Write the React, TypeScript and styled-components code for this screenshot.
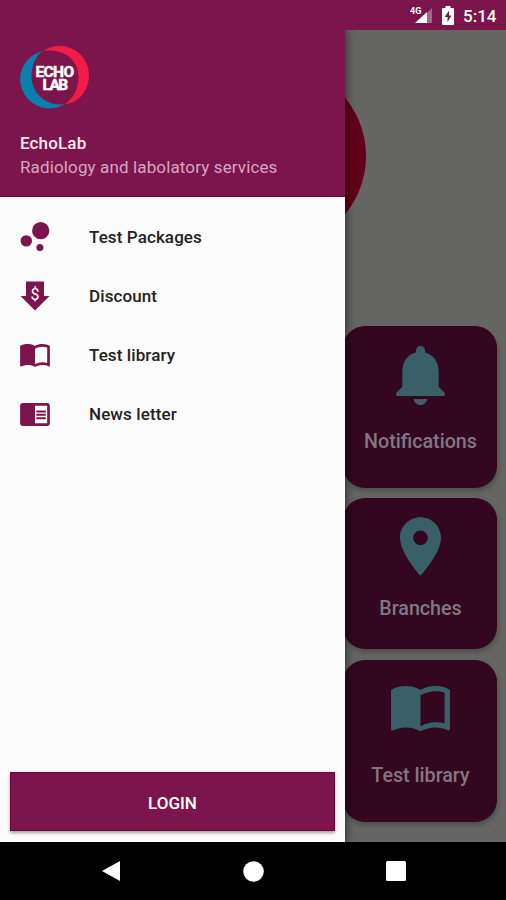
import React from 'react';
import styled, { createGlobalStyle } from 'styled-components';

const GlobalStyle = createGlobalStyle`
  *, *::before, *::after { box-sizing: border-box; }
  body { margin: 0; background: #000; font-family: Roboto, sans-serif; }
  svg { display: block; flex: none; }
`;

const plum = '#7c154b';

const Screen = styled.div`
  width: 506px;
  height: 900px;
  display: flex;
  flex-direction: column;
  overflow: hidden;
`;

const StatusBar = styled.header`
  flex: 0 0 30px;
  display: flex;
  align-items: center;
  justify-content: flex-end;
  padding-right: 9px;
  background: ${plum};
  color: #fff;
`;

const Clock = styled.span`
  margin-left: 9px;
  width: 34px;
  font-size: 17px;
  font-weight: 500;
  line-height: 26px;
  padding-top: 2px;
  white-space: nowrap;
`;

const BatteryIcon = styled.svg`
  margin-left: 9px;
`;

const Body = styled.main`
  position: relative;
  flex: 0 0 812px;
  overflow: hidden;
  background: #656564;
`;

const Home = styled.div`
  height: 100%;
  display: flex;
  flex-direction: column;
`;

const Hero = styled.div`
  flex: 0 0 296px;
  padding: 34px 0 0 182px;
`;

const HeroDisc = styled.div`
  width: 184px;
  height: 184px;
  border-radius: 50%;
  background: #600019;
`;

const Tiles = styled.div`
  display: flex;
  flex-direction: column;
  align-items: flex-end;
  gap: 10.5px;
  padding-right: 9.5px;
`;

const Tile = styled.div<{ $height: number; $top: number }>`
  width: 154px;
  height: ${({ $height }) => $height}px;
  padding-top: ${({ $top }) => $top}px;
  padding-left: 2px;
  display: flex;
  flex-direction: column;
  align-items: center;
  border-radius: 22px;
  background: #33071f;
  color: #3a6067;
  box-shadow: 1px 3px 5px rgba(0, 0, 0, 0.25);
`;

const TileLabel = styled.span<{ $gap: number }>`
  margin-top: ${({ $gap }) => $gap}px;
  color: #827780;
  font-size: 19.7px;
  font-weight: 500;
  line-height: 24px;
  white-space: nowrap;
`;

const Drawer = styled.aside`
  position: absolute;
  inset: 0 auto 0 0;
  width: 345px;
  display: flex;
  flex-direction: column;
  background: #fbfbfb;
  box-shadow: 0 0 9px 1px rgba(0, 0, 0, 0.55);
`;

const DrawerHeader = styled.div`
  flex: 0 0 167px;
  padding: 16px 20px 0;
  background: ${plum};
  border-bottom: 1px solid #6d0432;
`;

const BrandName = styled.div`
  margin-top: 22px;
  color: #fbeaf2;
  font-size: 17px;
  font-weight: 500;
  line-height: 23px;
  letter-spacing: 0.15px;
`;

const Tagline = styled.div`
  color: #d8a5c1;
  font-size: 17px;
  line-height: 24px;
  letter-spacing: 0.13px;
  white-space: nowrap;
`;

const Menu = styled.nav`
  flex: 1;
  padding-top: 10.5px;
`;

const MenuItem = styled.div`
  height: 59px;
  display: flex;
  align-items: center;
  padding-left: 20px;
  color: ${plum};
`;

const MenuIcon = styled.span`
  width: 69px;
`;

const MenuLabel = styled.span`
  margin-top: -1px;
  color: #222;
  font-size: 17px;
  font-weight: 500;
  line-height: 24px;
  letter-spacing: 0.1px;
`;

const LoginButton = styled.button`
  flex: 0 0 59px;
  margin: 0 10px 11px;
  border: 1px solid #6c0539;
  padding: 2px 0 0;
  background: ${plum};
  color: #fff;
  font: 500 17px Roboto, sans-serif;
  box-shadow: 0 2px 3px rgba(0, 0, 0, 0.35);
`;

const NavBar = styled.footer`
  flex: 0 0 58px;
  display: flex;
  align-items: center;
  justify-content: space-between;
  padding: 0 100px 0 101px;
  background: #000;
`;

const BOOK =
  'M21 5c-1.11-.35-2.33-.5-3.5-.5-1.95 0-4.05.4-5.5 1.5-1.45-1.1-3.55-1.5-5.5-1.5S2.45 4.9 1 6v14.65c0 .25.25.5.5.5.1 0 .15-.05.25-.05C3.1 20.45 5.05 20 6.5 20c1.95 0 4.05.4 5.5 1.5 1.35-.85 3.8-1.5 5.5-1.5 1.65 0 3.35.3 4.75 1.05.1.05.15.05.25.05.25 0 .5-.25.5-.5V6c-.6-.45-1.25-.75-2-1zm0 13.5c-1.1-.35-2.3-.5-3.5-.5-1.7 0-4.15.65-5.5 1.5V8c1.35-.85 3.8-1.5 5.5-1.5 1.2 0 2.4.15 3.5.5v11.5z';

const Book = ({ width, height }: { width: number; height: number }) => (
  <svg width={width} height={height} viewBox="1 4.5 22 17" fill="currentColor">
    <path d={BOOK} />
  </svg>
);

const Bell = () => (
  <svg width="49" height="59" viewBox="4 2.5 16 19.5" fill="currentColor">
    <path d="M12 22c1.1 0 2.2-.9 2.2-2H9.8c0 1.1 1.1 2 2.2 2zm6-6v-5c0-3.07-1.64-5.64-4.5-6.32V4c0-.83-.67-1.5-1.5-1.5s-1.5.67-1.5 1.5v.68C7.63 5.36 6 7.92 6 11v5l-2 2v1h16v-1l-2-2z" />
  </svg>
);

const Pin = () => (
  <svg width="41" height="59" viewBox="5 2 14 20" fill="currentColor">
    <path d="M12 2C8.13 2 5 5.13 5 9c0 5.25 7 13 7 13s7-7.75 7-13c0-3.87-3.13-7-7-7zm0 9.500c-1.380 0-2.500-1.120-2.500-2.500s1.120-2.500 2.500-2.500 2.500 1.120 2.500 2.500-1.120 2.500-2.500 2.500z" />
  </svg>
);

const Bubbles = () => (
  <svg width="30" height="30" viewBox="0 0 30 30" fill="currentColor">
    <circle cx="20.7" cy="8.700" r="8.600" />
    <circle cx="6.3" cy="18.900" r="5.700" />
    <circle cx="19.9" cy="25.400" r="3.500" />
  </svg>
);

const DiscountArrow = () => (
  <svg width="30" height="30" viewBox="0 0 30 30">
    <path d="M6 .5h18V15h5.500L15 29.500.5 15H6z" fill="currentColor" />
    <text x="15" y="18.500" textAnchor="middle" fontFamily="Roboto, sans-serif" fontSize="16" fill="#fff">
      $
    </text>
  </svg>
);

const Reader = () => (
  <svg width="30" height="23" viewBox="1 4 22 17" fill="currentColor">
    <path d="M13 12h7v1.500h-7zm0-2.500h7V11h-7zm0 5h7V16h-7zM21 4H3c-1.100 0-2 .9-2 2v13c0 1.100.9 2 2 2h18c1.100 0 2-.9 2-2V6c0-1.100-.9-2-2-2zm0 15h-9V6h9v13z" />
  </svg>
);

const Logo = () => (
  <svg width="70" height="64" viewBox="0 0 70 64">
    <path d="M23 5A29.500 29.500 0 0 0 0 33A29.500 30 0 0 0 45 58C27 61 12 48 11.500 31C11.500 19 16 9 23 5Z" fill="#087fad" />
    <path d="M23 5C29 1 34 0 40 0A29 29 0 0 1 69 29C69 44 59 57 45 58C53 53 58.500 43 58.500 31C58.500 14 44 2 23 5Z" fill="#f31c47" />
    <text
      fontFamily="Roboto, sans-serif"
      fontWeight="700"
      fontSize="15.500"
      letterSpacing="-0.600"
      fill="#fff"
      stroke="#fff"
      strokeWidth="0.500"
      textAnchor="middle"
    >
      <tspan x="34.500" y="30.500">ECHO</tspan>
      <tspan x="34.500" y="43.500" letterSpacing="-1.600">LAB</tspan>
    </text>
  </svg>
);

const menu = [
  { label: 'Test Packages', icon: <Bubbles /> },
  { label: 'Discount', icon: <DiscountArrow /> },
  { label: 'Test library', icon: <Book width={30} height={23} /> },
  { label: 'News letter', icon: <Reader /> },
];

const tiles = [
  { label: 'Notifications', icon: <Bell />, height: 161.5, top: 19.5, gap: 25 },
  { label: 'Branches', icon: <Pin />, height: 151, top: 19, gap: 21 },
  { label: 'Test library', icon: <Book width={59} height={45.5} />, height: 162, top: 26, gap: 32.5 },
];

export default function App() {
  return (
    <Screen>
      <GlobalStyle />
      <StatusBar>
        <svg width="23" height="20" viewBox="0 0 23 20" fill="#fff">
          <path d="M22 3v15H17V8z" opacity=".35" />
          <path d="M5 18 17 7v11z" />
          <text x="0" y="8.500" fontFamily="Roboto, sans-serif" fontSize="9" fontWeight="700">4G</text>
        </svg>
        <BatteryIcon width="12" height="19" viewBox="0 0 12 19">
          <path d="M3.500 0h5v2H11q1 0 1 1v15q0 1-1 1H1q-1 0-1-1V3q0-1 1-1h2.500z" fill="#fff" />
          <path d="M7 4.500 2.700 11h2.800v5L9.500 9.500H7z" fill={plum} />
        </BatteryIcon>
        <Clock>5:14</Clock>
      </StatusBar>
      <Body>
        <Home>
          <Hero>
            <HeroDisc />
          </Hero>
          <Tiles>
            {tiles.map(({ label, icon, height, top, gap }) => (
              <Tile key={label} $height={height} $top={top}>
                {icon}
                <TileLabel $gap={gap}>{label}</TileLabel>
              </Tile>
            ))}
          </Tiles>
        </Home>
        <Drawer>
          <DrawerHeader>
            <Logo />
            <BrandName>EchoLab</BrandName>
            <Tagline>Radiology and labolatory services</Tagline>
          </DrawerHeader>
          <Menu>
            {menu.map(({ label, icon }) => (
              <MenuItem key={label}>
                <MenuIcon>{icon}</MenuIcon>
                <MenuLabel>{label}</MenuLabel>
              </MenuItem>
            ))}
          </Menu>
          <LoginButton>LOGIN</LoginButton>
        </Drawer>
      </Body>
      <NavBar>
        <svg width="20" height="22" viewBox="0 0 20 22" fill="#fff">
          <path d="M19 1v20L1 11z" />
        </svg>
        <svg width="21" height="21" viewBox="0 0 21 21" fill="#fff">
          <circle cx="10.5" cy="10.500" r="10.300" />
        </svg>
        <svg width="20" height="20" viewBox="0 0 20 20" fill="#fff">
          <rect width="20" height="20" rx="1.500" />
        </svg>
      </NavBar>
    </Screen>
  );
}
